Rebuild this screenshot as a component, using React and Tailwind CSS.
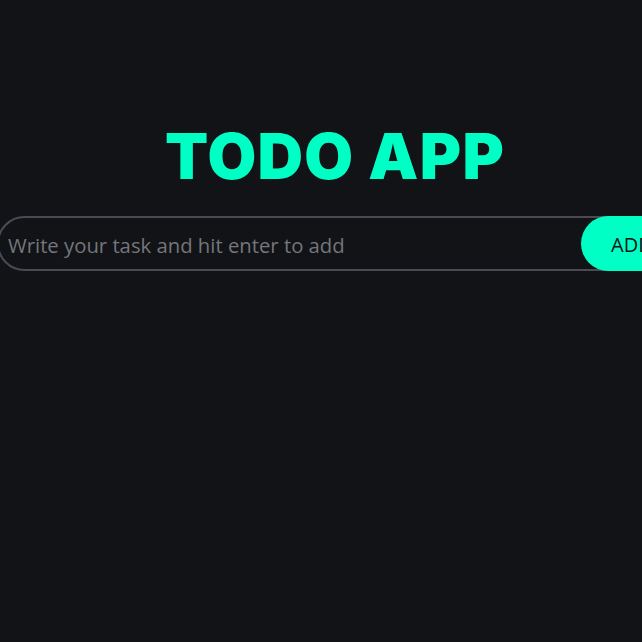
export default function App() {
    return (
        <div className="min-h-screen bg-[#111317] overflow-hidden" style={{ fontFamily: '"Open Sans", sans-serif' }}>
            <div className="w-[676px] -ml-[3px] pt-[118px]">
                {/* Title */}
                <h1 className="text-center text-[63px] leading-[76px] font-black tracking-[1.3px] text-[#00ffc4] font-['Inter',sans-serif]">
                    TODO APP
                </h1>

                {/* Input row */}
                <div className="relative mt-[22px] h-[55px]">
                    <input
                        type="text"
                        placeholder="Write your task and hit enter to add"
                        className="w-full h-full rounded-full border-2 border-[#4a4b52] bg-transparent pl-[9px] pr-[110px] pt-[3px] text-[20.3px] text-white placeholder:text-[#74767b] outline-none"
                    />
                    <button className="absolute right-0 top-0 h-full w-[92px] rounded-full bg-[#00ffc4] pt-[2px] text-left text-[20px] text-[#111317]">
                        <span className="ml-[30px]">ADD</span>
                    </button>
                </div>
            </div>
        </div>
    );
}
